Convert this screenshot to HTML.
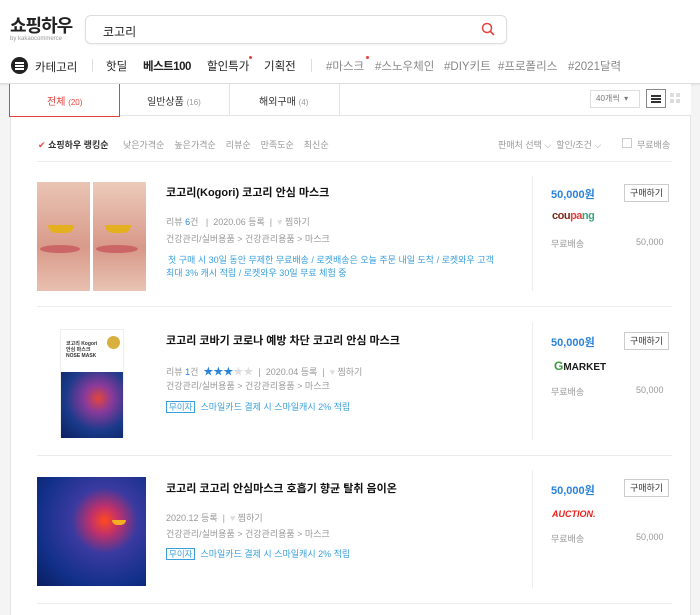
<!DOCTYPE html>
<html><head><meta charset="utf-8"><style>
*{margin:0;padding:0;box-sizing:border-box}
body{width:700px;height:606px;overflow:hidden;background:#f4f4f4;font-family:"Liberation Sans","Noto Sans CJK KR",sans-serif;color:#333;position:relative}
.a{position:absolute;white-space:nowrap}
.hdr{position:absolute;left:0;top:0;width:700px;height:84px;background:#fff;border-bottom:1px solid #ddd;box-shadow:0 1px 2px rgba(0,0,0,.08)}
.box{position:absolute;left:10px;top:85px;width:681px;height:530px;background:#fff;border-left:1px solid #e4e4e4;border-right:1px solid #e4e4e4}
.g{color:#999;font-size:9px}
.sep{position:absolute;left:37px;width:635px;height:1px;background:#ececec}
.btn{position:absolute;left:624px;width:45px;height:18px;border:1px solid #ccc;font-size:9px;text-align:center;line-height:16px;color:#333;background:#fff}
.price{position:absolute;left:551px;color:#2b82d9;font-weight:bold;font-size:11px}
.t{font-size:11px;font-weight:bold;color:#111;left:166px}
.m{font-size:9px;color:#999;left:166px}
.badge{display:inline-block;border:1px solid #3aa0dc;color:#3aa0dc;padding:0 2px;font-size:8.5px;line-height:10px;margin-right:5px}
.blue{color:#3aa0dc;font-size:9px}
</style></head><body>
<div class="hdr">
<div class="a" style="left:10px;top:12px;font-size:18px;font-weight:bold;color:#222;letter-spacing:-1px">쇼핑하우</div>
<div class="a" style="left:10px;top:36px;font-size:6px;color:#999">by kakaocommerce</div>
<div class="a" style="left:85px;top:15px;width:422px;height:29px;border:1px solid #ddd;border-radius:6px;box-shadow:0 1px 2px rgba(0,0,0,.06)"></div>
<div class="a" style="left:103px;top:23px;font-size:12px;color:#222">코고리</div>
<svg class="a" style="left:481px;top:22px" width="14" height="14" viewBox="0 0 14 14"><circle cx="6" cy="6" r="4.5" fill="none" stroke="#e8413c" stroke-width="1.5"/><path d="M9.5 9.5L13 13" stroke="#e8413c" stroke-width="1.6"/></svg>
<div class="a" style="left:11px;top:57px;width:17px;height:17px;border-radius:50%;background:#222"></div>
<div class="a" style="left:15px;top:62px;width:9px;height:1.5px;background:#fff;box-shadow:0 3px 0 #fff,0 6px 0 #fff"></div>
<div class="a" style="left:35px;top:59px;font-size:11.5px;color:#222">카테고리</div>
<div class="a" style="left:92px;top:59px;width:1px;height:13px;background:#ddd"></div>
<div class="a" style="left:106px;top:58px;font-size:11.5px;color:#222">핫딜</div>
<div class="a" style="left:143px;top:58px;font-size:11.5px;color:#222;font-weight:bold;letter-spacing:-.5px">베스트100</div>
<div class="a" style="left:207px;top:58px;font-size:11.5px;color:#222">할인특가</div>
<div class="a" style="left:249px;top:56px;width:3px;height:3px;border-radius:50%;background:#e8413c"></div>
<div class="a" style="left:264px;top:58px;font-size:11.5px;color:#222">기획전</div>
<div class="a" style="left:311px;top:59px;width:1px;height:13px;background:#ddd"></div>
<div class="a" style="left:326px;top:58px;font-size:11.5px;color:#888">#마스크</div>
<div class="a" style="left:366px;top:56px;width:3px;height:3px;border-radius:50%;background:#e8413c"></div>
<div class="a" style="left:375px;top:58px;font-size:11.5px;color:#888">#스노우체인</div>
<div class="a" style="left:444px;top:58px;font-size:11.5px;color:#888">#DIY키트</div>
<div class="a" style="left:498px;top:58px;font-size:11.5px;color:#888">#프로폴리스</div>
<div class="a" style="left:568px;top:58px;font-size:11.5px;color:#888">#2021달력</div>
</div>
<div class="box"></div>
<div class="a" style="left:10px;top:84px;width:681px;height:32px;border-bottom:1px solid #e4e4e4;background:#fff"></div>
<div class="a" style="left:120px;top:84px;width:110px;height:32px;border-right:1px solid #e4e4e4"></div>
<div class="a" style="left:230px;top:84px;width:110px;height:32px;border-right:1px solid #e4e4e4"></div>
<div class="a" style="left:9px;top:84px;width:111px;height:33px;border:1px solid #e8413c;border-top:none;background:#fff"></div>
<div class="a" style="left:47px;top:93px;font-size:10px;color:#e8413c">전체 <span style="font-size:8px">(20)</span></div>
<div class="a" style="left:147px;top:93px;font-size:10px;color:#333">일반상품 <span style="font-size:8px;color:#999">(16)</span></div>
<div class="a" style="left:259px;top:93px;font-size:10px;color:#333">해외구매 <span style="font-size:8px;color:#999">(4)</span></div>
<div class="a" style="left:590px;top:90px;width:50px;height:18px;border:1px solid #ddd;font-size:8px;color:#777;line-height:16px;padding-left:5px">40개씩 &nbsp;▾</div>
<div class="a" style="left:646px;top:89px;width:20px;height:19px;border:1px solid #888;background:#fff"></div>
<div class="a" style="left:651px;top:95px;width:10px;height:1.5px;background:#333;box-shadow:0 3px 0 #333,0 6px 0 #333"></div>
<div class="a" style="left:670px;top:93px;width:4px;height:4px;background:#ddd;box-shadow:6px 0 0 #ddd,0 6px 0 #ddd,6px 6px 0 #ddd"></div>
<div class="a" style="left:38px;top:138px;font-size:9px;color:#333"><span style="color:#e8413c">✔</span> <b>쇼핑하우 랭킹순</b></div>
<div class="a g" style="left:123px;top:138px;word-spacing:0">낮은가격순 &nbsp;&nbsp; 높은가격순 &nbsp;&nbsp; 리뷰순 &nbsp;&nbsp; 만족도순 &nbsp;&nbsp; 최신순</div>
<div class="a g" style="left:498px;top:138px">판매처 선택 ⌵ &nbsp;할인/조건 ⌵</div>
<div class="a" style="left:622px;top:138px;width:10px;height:10px;border:1px solid #ccc"></div>
<div class="a g" style="left:637px;top:138px">무료배송</div>
<div class="sep" style="top:161px"></div>
<div class="sep" style="top:306px"></div>
<div class="sep" style="top:455px"></div>
<div class="sep" style="top:603px"></div>
<div class="a" style="left:532px;top:176px;width:1px;height:115px;background:#eee"></div>
<div class="a" style="left:532px;top:322px;width:1px;height:118px;background:#eee"></div>
<div class="a" style="left:532px;top:470px;width:1px;height:118px;background:#eee"></div>
<!-- item 1 -->
<div class="a" style="left:37px;top:182px;width:53px;height:109px;background:linear-gradient(180deg,#e9c4b4,#d99a8a 60%,#e8c0b0)"></div>
<div class="a" style="left:93px;top:182px;width:53px;height:109px;background:linear-gradient(180deg,#eccbbb,#d89888 60%,#e8c3b3)"></div>
<div class="a" style="left:48px;top:225px;width:26px;height:8px;border-radius:0 0 12px 12px;background:#e4b020"></div>
<div class="a" style="left:105px;top:225px;width:26px;height:8px;border-radius:0 0 12px 12px;background:#e4b020"></div>
<div class="a" style="left:40px;top:245px;width:40px;height:8px;border-radius:50%;background:#c66"></div>
<div class="a" style="left:96px;top:245px;width:42px;height:8px;border-radius:50%;background:#c66"></div>
<div class="a t" style="top:184px">코고리(Kogori) 코고리 안심 마스크</div>
<div class="a m" style="top:215px">리뷰 <span style="color:#2b82d9">6</span>건 &nbsp;&nbsp;|&nbsp; 2020.06 등록 &nbsp;|&nbsp; <span style="color:#ddd">♥</span> 찜하기</div>
<div class="a m" style="top:232px">건강관리/실버용품 &gt; 건강관리용품 &gt; 마스크</div>
<div class="a blue" style="left:168px;top:253px">첫 구매 시 30일 동안 무제한 무료배송 / 로켓배송은 오늘 주문 내일 도착 / 로켓와우 고객</div>
<div class="a blue" style="left:166px;top:266px">최대 3% 캐시 적립 / 로켓와우 30일 무료 체험 중</div>
<div class="price" style="top:186px">50,000원</div>
<div class="btn" style="top:184px">구매하기</div>
<div class="a" style="left:552px;top:210px;font-size:11px;font-weight:bold;color:#7a2a1a;letter-spacing:-.5px">cou<span style="color:#e8413c">pa</span><span style="color:#3aa47a">ng</span></div>
<div class="a g" style="left:551px;top:237px">무료배송</div>
<div class="a g" style="left:636px;top:237px">50,000</div>
<!-- item 2 -->
<div class="a" style="left:60px;top:329px;width:64px;height:109px;background:#fff;border:1px solid #eee"></div>
<div class="a" style="left:61px;top:372px;width:62px;height:66px;background:radial-gradient(circle at 60% 40%,#e2453a 0,#8a3a9a 25%,#1a3a8a 60%,#0c2060)"></div>
<div class="a" style="left:66px;top:341px;font-size:5px;font-weight:bold;color:#333;line-height:6px">코고리 Kogori<br>안심 마스크<br>NOSE MASK</div>
<div class="a" style="left:107px;top:336px;width:13px;height:13px;border-radius:50%;background:#d9b040"></div>
<div class="a t" style="top:332px">코고리 코바기 코로나 예방 차단 코고리 안심 마스크</div>
<div class="a m" style="top:363px">리뷰 <span style="color:#2b82d9">1</span>건 &nbsp;<span style="color:#2b82d9;font-size:10px">★★★</span><span style="color:#ddd;font-size:10px">★★</span> &nbsp;| &nbsp;2020.04 등록 &nbsp;| &nbsp;<span style="color:#ddd">♥</span> 찜하기</div>
<div class="a m" style="top:379px">건강관리/실버용품 &gt; 건강관리용품 &gt; 마스크</div>
<div class="a blue" style="left:166px;top:400px"><span class="badge">무이자</span>스마일카드 결제 시 스마일캐시 2% 적립</div>
<div class="price" style="top:334px">50,000원</div>
<div class="btn" style="top:332px">구매하기</div>
<div class="a" style="left:554px;top:359px;font-size:10px;font-weight:bold;color:#1a1a1a"><span style="color:#3a9a3a;font-size:12px">G</span>MARKET</div>
<div class="a g" style="left:551px;top:385px">무료배송</div>
<div class="a g" style="left:636px;top:385px">50,000</div>
<!-- item 3 -->
<div class="a" style="left:37px;top:477px;width:109px;height:109px;background:radial-gradient(circle at 62% 40%,#ff4a20 0,#c0306a 15%,#3a3aa0 35%,#12308a 70%,#0a1e60)"></div>
<div class="a" style="left:112px;top:520px;width:14px;height:5px;background:#f4b020;border-radius:0 0 7px 7px"></div>
<div class="a t" style="top:480px">코고리 코고리 안심마스크 호흡기 향균 탈취 음이온</div>
<div class="a m" style="top:511px">2020.12 등록 &nbsp;| &nbsp;<span style="color:#ddd">♥</span> 찜하기</div>
<div class="a m" style="top:527px">건강관리/실버용품 &gt; 건강관리용품 &gt; 마스크</div>
<div class="a blue" style="left:166px;top:547px"><span class="badge">무이자</span>스마일카드 결제 시 스마일캐시 2% 적립</div>
<div class="price" style="top:482px">50,000원</div>
<div class="btn" style="top:479px">구매하기</div>
<div class="a" style="left:552px;top:509px;font-size:9px;font-weight:bold;color:#e8201a;font-style:italic">AUCTION.</div>
<div class="a g" style="left:551px;top:532px">무료배송</div>
<div class="a g" style="left:636px;top:532px">50,000</div>
</body></html>
